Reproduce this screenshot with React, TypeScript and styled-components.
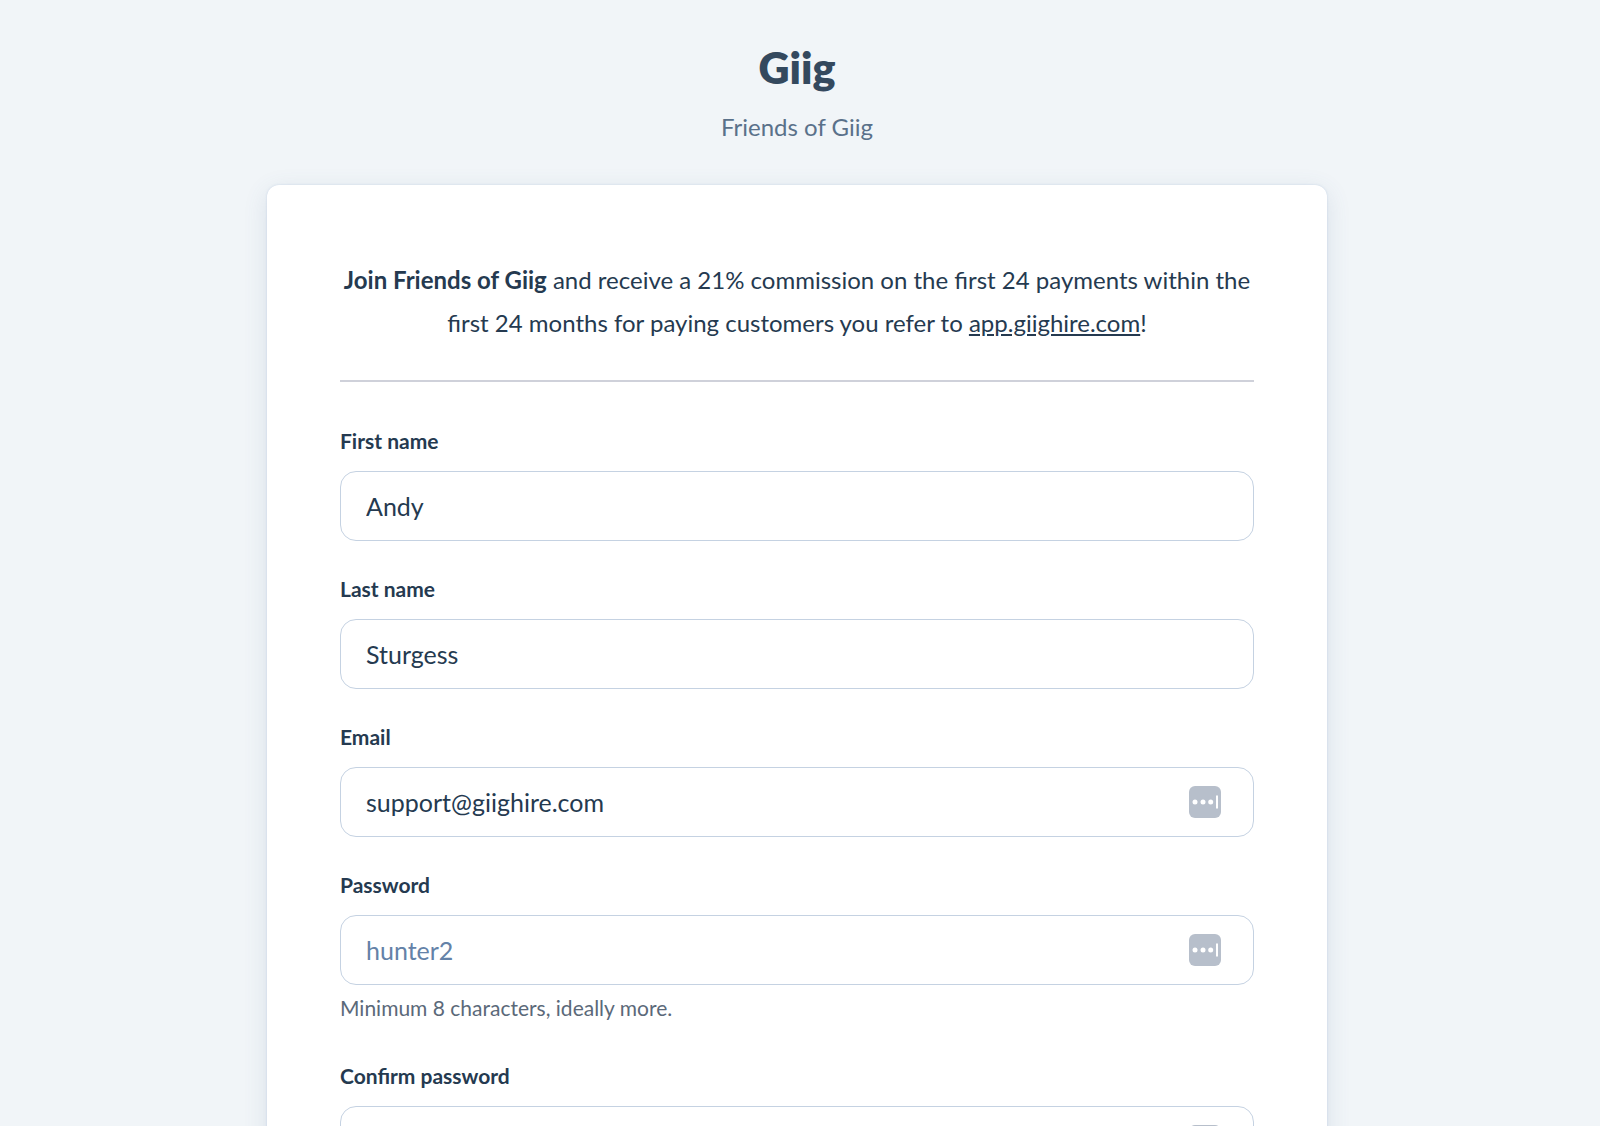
import React from "react";
import styled, { createGlobalStyle } from "styled-components";

const GlobalStyle = createGlobalStyle`
  *, *::before, *::after { box-sizing: border-box; }
  body {
    margin: 0;
    background: #f1f5f8;
    color: #253a50;
    font-family: Lato, "Open Sans", sans-serif;
    font-size: 24px;
  }
`;

const Page = styled.div`
  height: 100vh;
  overflow: hidden;
  padding: 42px 36px 0 30px;
  background: #f1f5f8;
`;

const Header = styled.header`
  display: flex;
  flex-direction: column;
  align-items: center;
  gap: 16px;
  margin-bottom: 41px;
`;

const Brand = styled.h1`
  margin: 0;
  font-size: 43px;
  line-height: 52px;
  font-weight: 800;
  color: #34495e;
`;

const Tagline = styled.p`
  margin: 0;
  line-height: 34px;
  color: #5a718a;
`;

const Card = styled.main`
  max-width: 1060px;
  margin: 0 auto;
  padding: 73px;
  border-radius: 12px;
  background: #fff;
  box-shadow: 0 0 2px rgba(160, 185, 220, 0.5), 0 6px 24px rgba(71, 96, 140, 0.14);
`;

const Intro = styled.p`
  margin: 0;
  padding-bottom: 36px;
  border-bottom: 2px solid #cfd1da;
  text-align: center;
  line-height: 43px;
`;

const SiteLink = styled.a`
  color: inherit;
  text-decoration: underline;
`;

const Form = styled.form`
  display: flex;
  flex-direction: column;
  gap: 32px;
  padding-top: 43px;
`;

const Field = styled.div`
  display: flex;
  flex-direction: column;
`;

const Label = styled.label`
  margin-bottom: 14px;
  font-size: 21px;
  line-height: 32px;
  font-weight: 700;
`;

const Control = styled.div`
  position: relative;
`;

const Input = styled.input`
  display: block;
  width: 100%;
  height: 70px;
  padding: 0 25px;
  border: 1px solid #c5d2e2;
  border-radius: 16px;
  outline: none;
  background: #fff;
  color: inherit;
  font-family: inherit;
  font-size: 25px;

  &::placeholder {
    color: #6482a8;
    opacity: 1;
  }
`;

const FillButton = styled.button`
  position: absolute;
  top: 19px;
  right: 33px;
  width: 32px;
  height: 32px;
  padding: 0;
  border: 0;
  background: none;

  svg { display: block; }
`;

const Hint = styled.p`
  margin: 7px 0 4px;
  font-size: 21px;
  line-height: 32px;
  color: #5b6979;
`;

interface FieldData {
  id: string;
  label: string;
  type: string;
  value?: string;
  placeholder?: string;
  hint?: string;
  fill?: boolean;
}

const fields: FieldData[] = [
  { id: "first-name", label: "First name", type: "text", value: "Andy" },
  { id: "last-name", label: "Last name", type: "text", value: "Sturgess" },
  { id: "email", label: "Email", type: "email", value: "support@giighire.com", fill: true },
  {
    id: "password",
    label: "Password",
    type: "password",
    placeholder: "hunter2",
    hint: "Minimum 8 characters, ideally more.",
    fill: true,
  },
  { id: "confirm-password", label: "Confirm password", type: "password", fill: true },
];

const FillIcon = () => (
  <svg width="32" height="32" viewBox="0 0 32 32" aria-hidden="true">
    <rect width="32" height="32" rx="6" fill="#b7bfcb" />
    <circle cx="6" cy="16" r="2.5" fill="#fff" />
    <circle cx="14" cy="16" r="2.5" fill="#fff" />
    <circle cx="21.7" cy="16" r="2.5" fill="#fff" />
    <rect x="27" y="9.5" width="2" height="13" fill="#fff" />
  </svg>
);

export default function App() {
  return (
    <>
      <GlobalStyle />
      <Page>
        <Header>
          <Brand>Giig</Brand>
          <Tagline>Friends of Giig</Tagline>
        </Header>
        <Card>
          <Intro>
            <strong>Join Friends of Giig</strong> and receive a 21% commission on the first 24
            payments within the first 24 months for paying customers you refer to{" "}
            <SiteLink href="https://app.giighire.com">app.giighire.com</SiteLink>!
          </Intro>
          <Form>
            {fields.map((f) => (
              <Field key={f.id}>
                <Label htmlFor={f.id}>{f.label}</Label>
                <Control>
                  <Input
                    id={f.id}
                    type={f.type}
                    defaultValue={f.value}
                    placeholder={f.placeholder}
                    aria-describedby={f.hint ? `${f.id}-hint` : undefined}
                  />
                  {f.fill && (
                    <FillButton type="button" aria-label={`Fill ${f.label.toLowerCase()}`}>
                      <FillIcon />
                    </FillButton>
                  )}
                </Control>
                {f.hint && <Hint id={`${f.id}-hint`}>{f.hint}</Hint>}
              </Field>
            ))}
          </Form>
        </Card>
      </Page>
    </>
  );
}
